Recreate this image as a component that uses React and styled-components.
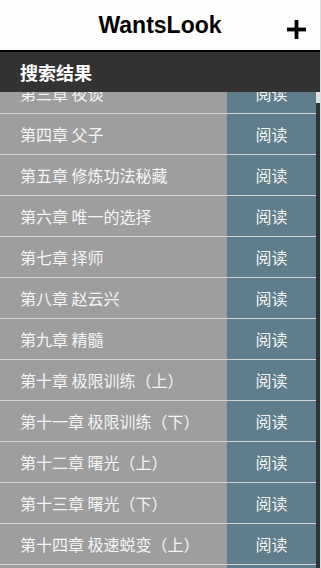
import React from "react";
import styled, { createGlobalStyle } from "styled-components";

const Global = createGlobalStyle`
  html, body { margin: 0; padding: 0; background: #dcdcdc; }
  body { font-family: "Noto Sans CJK SC", "Noto Sans", sans-serif; }
`;

const Screen = styled.div`
  width: 320px;
  height: 568px;
  display: flex;
  flex-direction: column;
  overflow: hidden;
  background: #333;
`;

const Header = styled.header`
  height: 50px;
  background: #fdfdfd;
  border-bottom: 2px solid #000;
  display: grid;
  grid-template-columns: 1fr auto 1fr;
  align-items: center;
`;

const Brand = styled.h1`
  grid-column: 2;
  margin: 0;
  font-family: "Liberation Sans", Arial, sans-serif;
  font-weight: bold;
  font-size: 23px;
  color: #000;
  line-height: 1;
  padding-top: 1px;
`;

const AddButton = styled.button`
  justify-self: end;
  margin-right: 14px;
  margin-top: 8px;
  border: none;
  background: none;
  padding: 0;
  width: 19px;
  height: 19px;
  display: block;
`;

const TitleBar = styled.div`
  height: 40px;
  background: #333;
  color: #fff;
  font-weight: bold;
  font-size: 18px;
  display: flex;
  align-items: center;
  padding-left: 20px;
`;

const Body = styled.div`
  flex: 1;
  display: flex;
  min-height: 0;
`;

const List = styled.ul`
  flex: 1;
  list-style: none;
  margin: 0;
  padding: 0;
  overflow: hidden;
`;

const Rows = styled.div`
  margin-top: -19px;
`;

const Row = styled.li`
  height: 40px;
  display: flex;
  border-bottom: 1px solid #d2d2d2;
  background: #9e9e9e;
`;

const Chapter = styled.span`
  flex: 1;
  display: flex;
  align-items: center;
  padding-left: 20px;
  font-size: 16px;
  color: #f4f4f4;
  white-space: nowrap;
`;

const ReadButton = styled.span`
  width: 89px;
  background: #607d8b;
  color: #f4f4f4;
  font-size: 16px;
  display: flex;
  align-items: center;
  justify-content: center;
`;

const Rail = styled.div`
  width: 4px;
  background: #333;
`;

const Thumb = styled.div`
  height: 11px;
  background: #e0e0e0;
`;

const chapters = [
  "第三章 夜谈",
  "第四章 父子",
  "第五章 修炼功法秘藏",
  "第六章 唯一的选择",
  "第七章 择师",
  "第八章 赵云兴",
  "第九章 精髓",
  "第十章 极限训练（上）",
  "第十一章 极限训练（下）",
  "第十二章 曙光（上）",
  "第十三章 曙光（下）",
  "第十四章 极速蜕变（上）",
  "第十五章 极速蜕变（下）",
];

export default function App() {
  return (
    <>
      <Global />
      <Screen>
        <Header>
          <Brand>WantsLook</Brand>
          <AddButton aria-label="add">
            <svg width="19" height="19" viewBox="0 0 19 19">
              <rect x="7.6" y="0" width="3.8" height="19" fill="#000" />
              <rect x="0" y="7.6" width="19" height="3.8" fill="#000" />
            </svg>
          </AddButton>
        </Header>
        <TitleBar>搜索结果</TitleBar>
        <Body>
          <List>
            <Rows>
              {chapters.map((c) => (
                <Row key={c}>
                  <Chapter>{c}</Chapter>
                  <ReadButton>阅读</ReadButton>
                </Row>
              ))}
            </Rows>
          </List>
          <Rail>
            <Thumb />
          </Rail>
        </Body>
      </Screen>
    </>
  );
}
